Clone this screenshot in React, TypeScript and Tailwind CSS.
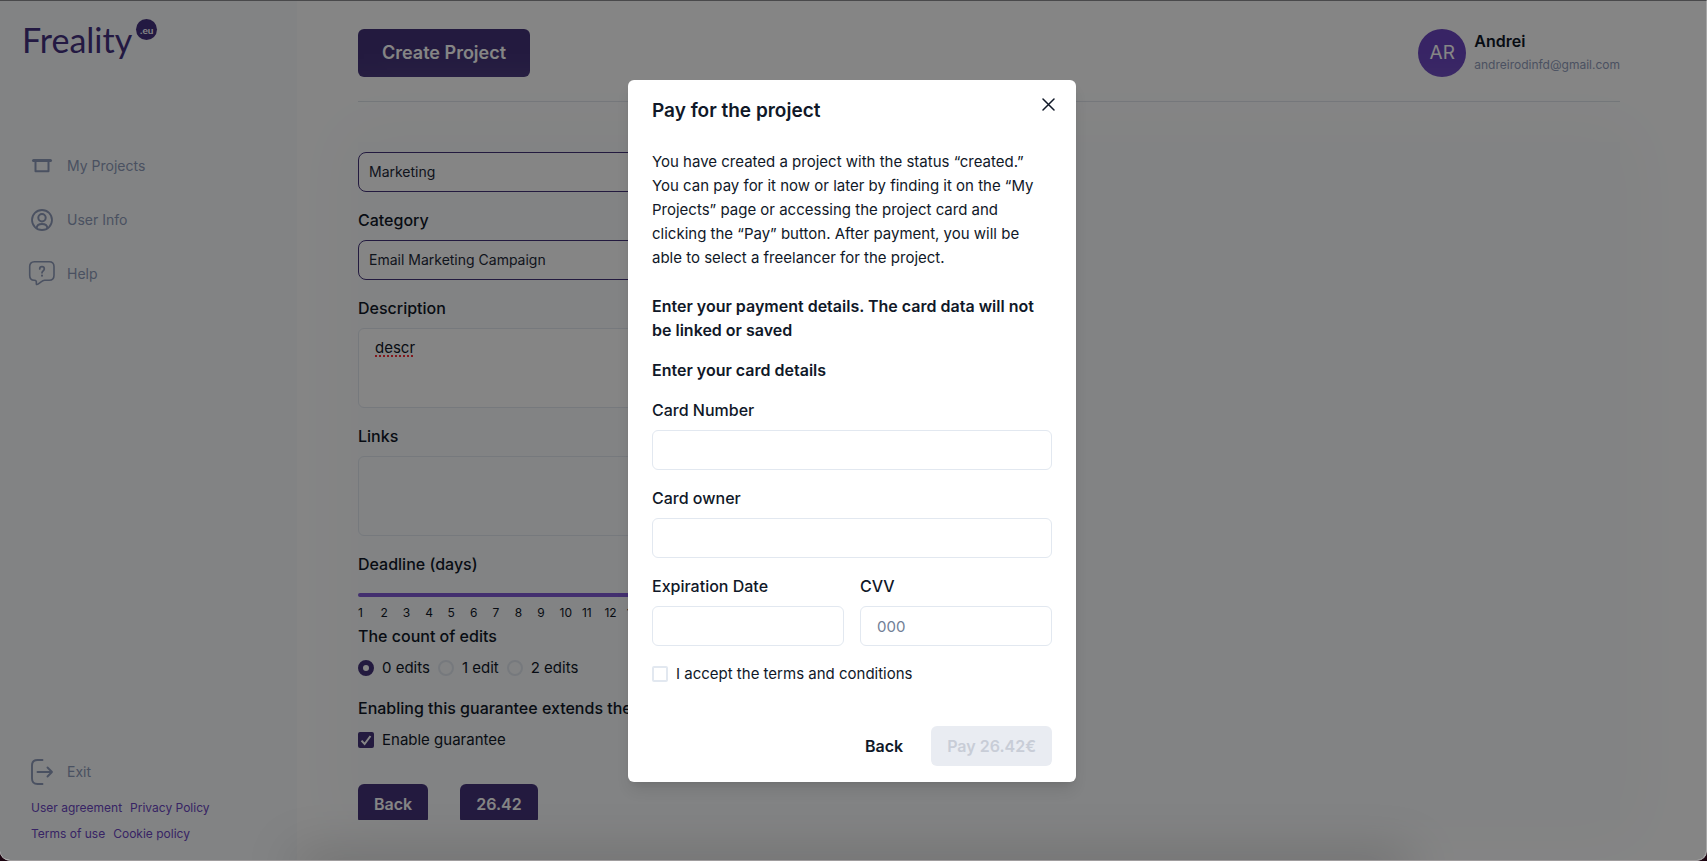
import { useState } from 'react';
import type { ReactNode } from 'react';

const EDIT_OPTIONS = ['0 edits', '1 edit', '2 edits'];
const DAYS = Array.from({ length: 30 }, (_, i) => i + 1);

const LEGAL_LINKS = [
  ['User agreement', 'Privacy Policy'],
  ['Terms of use', 'Cookie policy'],
];

function ProjectsIcon() {
  return (
    <svg width="28" height="28" viewBox="0 0 28 28" fill="none" stroke="currentColor" strokeWidth="2">
      <path d="M5.5 8.500h17" strokeWidth="3" strokeLinecap="round" />
      <path d="M7.500 9v10.300h13V9" strokeLinejoin="round" />
    </svg>
  );
}

function UserIcon() {
  return (
    <svg width="28" height="28" viewBox="0 0 28 28" fill="none" stroke="currentColor" strokeWidth="1.800">
      <circle cx="14" cy="14" r="10" />
      <circle cx="14" cy="11.800" r="3.700" strokeWidth="2" />
      <path d="M8.600 22.200c.2-3 2.200-4.200 5.400-4.200s5.200 1.200 5.400 4.200" strokeWidth="2" />
    </svg>
  );
}

function HelpIcon() {
  return (
    <svg width="28" height="28" viewBox="0 0 28 28" fill="none" stroke="currentColor" strokeWidth="1.600" strokeLinecap="round" strokeLinejoin="round">
      <path d="M6.300 1.800h14.900c3.300 0 4.800 1.900 4.800 4.800v8.600c0 3.200-1.800 5-4.800 5h-4.600c-1.700 0-3.300 1.500-5.200 2.900-1.200.9-2.500 1.700-2.900 1.400-.6-.4.300-2.300-.4-3.500-.3-.6-.9-.8-1.900-.8C3.400 20.200 1.700 18.400 1.700 15.200V6.600c0-2.900 1.500-4.800 4.600-4.800Z" />
      <path d="M11.700 9c0-1.400 1-2.300 2.300-2.300s2.300.9 2.300 2.200c0 1.900-2.300 1.900-2.300 3.900" strokeWidth="1.700" />
      <path d="M14 15.600v.1" strokeWidth="2" />
    </svg>
  );
}

function ExitIcon() {
  return (
    <svg width="28" height="28" viewBox="0 0 28 28" fill="none" stroke="currentColor" strokeWidth="1.900" strokeLinecap="round" strokeLinejoin="round">
      <path d="M14.500 2H9.500C5.800 2 4 3.800 4 7.500v13C4 24.200 5.800 26 9.500 26h5" />
      <path d="M9.500 14H24M19.500 9.500 24 14l-4.500 4.500" />
    </svg>
  );
}

function NavItem({ icon, label }: { icon: ReactNode; label: string }) {
  return (
    <a href="#" className="flex items-center gap-[11px] h-[30px] text-sm text-[#8f9bba]">
      {icon}
      {label}
    </a>
  );
}

function Sidebar() {
  return (
    <aside className="w-[297px] shrink-0 bg-[#f9fbfd] flex flex-col justify-between">
      <div>
        <a href="#" className="flex items-start gap-1 pl-[22px] pt-[18px] text-[#44307f]">
          <span className="font-['Lato'] text-[34px] leading-[42px]">Freality</span>
          <span className="w-[21px] h-[21px] rounded-full bg-[#44307f] flex items-center justify-center font-['Lato'] font-bold text-[10px] leading-none text-white">
            .eu
          </span>
        </a>
        <nav className="flex flex-col gap-6 pl-7 mt-[90px]">
          <NavItem icon={<ProjectsIcon />} label="My Projects" />
          <NavItem icon={<UserIcon />} label="User Info" />
          <NavItem icon={<HelpIcon />} label="Help" />
        </nav>
      </div>
      <div className="pb-[13px]">
        <div className="pl-7">
          <NavItem icon={<ExitIcon />} label="Exit" />
        </div>
        <div className="pl-[31px] mt-2">
          {LEGAL_LINKS.map(row => (
            <div key={row[0]} className="flex gap-2 text-xs leading-[26px] text-[#6b46c1]">
              {row.map(label => <a key={label} href="#">{label}</a>)}
            </div>
          ))}
        </div>
      </div>
    </aside>
  );
}

function Header() {
  return (
    <header className="flex items-center justify-between pb-6 border-b border-[#d9dfe6]">
      <button className="h-12 px-6 rounded-md bg-[#44337a] text-white text-lg font-semibold">Create Project</button>
      <div className="flex items-center gap-2">
        <div className="w-12 h-12 rounded-full bg-[#6b46c1] text-white text-[19px] flex items-center justify-center">AR</div>
        <div>
          <p className="font-semibold">Andrei</p>
          <p className="text-xs leading-6 text-[#8f9bba]">andreirodinfd@gmail.com</p>
        </div>
      </div>
    </header>
  );
}

function CheckBox({ id, checked, onChange }: { id: string; checked: boolean; onChange: () => void }) {
  return (
    <span className="relative flex w-4 h-4">
      <input id={id} type="checkbox" checked={checked} onChange={onChange}
        className="w-4 h-4 appearance-none rounded-xs border-2 border-[#e2e8f0] checked:bg-[#44337a] checked:border-[#44337a]" />
      {checked && (
        <svg className="absolute inset-0 pointer-events-none" width="16" height="16" viewBox="0 0 16 16" fill="none" stroke="white" strokeWidth="2">
          <path d="M3.500 8.600 6.600 12l5.900-8" />
        </svg>
      )}
    </span>
  );
}

function ProjectForm() {
  const [edits, setEdits] = useState(0);
  const [guarantee, setGuarantee] = useState(true);
  const selectClass = 'w-full h-10 px-[10px] appearance-none rounded-lg border border-[#44337a] bg-white text-sm text-gray-800';
  const areaClass = 'block w-full h-20 mt-2 px-4 py-2 resize-none rounded-md border border-[#e2e8f0] text-[15px] leading-[22px]';

  return (
    <form className="max-w-2xl pt-[10px]" onSubmit={e => e.preventDefault()}>
      <select aria-label="Direction" className={selectClass}>
        <option>Marketing</option>
      </select>

      <label htmlFor="category" className="block mt-4 mb-2 font-medium">Category</label>
      <select id="category" className={selectClass}>
        <option>Email Marketing Campaign</option>
      </select>

      <label htmlFor="description" className="block mt-4 font-medium">Description</label>
      <textarea id="description" defaultValue="descr"
        className={`${areaClass} bg-white underline decoration-dotted decoration-2 decoration-red-500 underline-offset-2`} />

      <label htmlFor="links" className="block mt-4 font-medium">Links</label>
      <textarea id="links" className={`${areaClass} bg-transparent`} />

      <label htmlFor="deadline" className="block mt-4 font-medium">Deadline (days)</label>
      <input id="deadline" type="range" min={1} max={30} defaultValue={30}
        className="block w-full h-1 mt-[17px] appearance-none rounded-sm bg-[#805ad5]" />
      <div className="grid grid-cols-30 mt-[5px] text-xs leading-[22px]">
        {DAYS.map(day => <span key={day}>{day}</span>)}
      </div>

      <fieldset>
        <legend className="font-medium">The count of edits</legend>
        <div className="flex gap-2 mt-2">
          {EDIT_OPTIONS.map((label, i) => (
            <label key={label} className="flex items-center gap-2 text-[15px] leading-6">
              <input type="radio" name="edits" checked={edits === i} onChange={() => setEdits(i)}
                className="w-4 h-4 appearance-none rounded-full border-2 border-[#e2e8f0] checked:border-[5px] checked:border-[#44337a] checked:bg-white" />
              {label}
            </label>
          ))}
        </div>
      </fieldset>

      <p className="mt-4 font-medium">Enabling this guarantee extends the deadline</p>
      <div className="flex items-center gap-2 mt-2">
        <CheckBox id="guarantee" checked={guarantee} onChange={() => setGuarantee(!guarantee)} />
        <label htmlFor="guarantee" className="text-[15px] leading-6">Enable guarantee</label>
      </div>

      <div className="flex gap-8 mt-8">
        <button type="button" className="h-10 px-4 rounded-md bg-[#44337a] text-white font-semibold">Back</button>
        <button className="h-10 px-4 rounded-md bg-[#44337a] text-white font-semibold">26.42</button>
      </div>
    </form>
  );
}

function Field({ id, label, placeholder }: { id: string; label: string; placeholder?: string }) {
  return (
    <div className="mt-4">
      <label htmlFor={id} className="block mb-2 font-medium">{label}</label>
      <input id={id} type="text" placeholder={placeholder}
        className="block w-full h-10 px-4 rounded-md border border-[#e2e8f0] text-[15px] placeholder:text-[#718096]" />
    </div>
  );
}

function PaymentModal() {
  const [accepted, setAccepted] = useState(false);

  return (
    <div className="absolute inset-0 bg-black/48 flex justify-center items-start pl-4 pr-[18px] pt-[79px]">
      <div role="dialog" aria-labelledby="pay-title" className="relative w-full max-w-md bg-white rounded-md shadow-lg px-6 py-4">
        <h2 id="pay-title" className="text-[19px] leading-[30px] font-semibold">Pay for the project</h2>
        <button aria-label="Close" className="absolute top-2 right-3 w-8 h-8 flex items-center justify-center">
          <svg width="13" height="13" viewBox="0 0 13 13" stroke="currentColor" strokeWidth="1.500" strokeLinecap="round">
            <path d="m1 1 11 11M12 1 1 12" />
          </svg>
        </button>

        <p className="mt-6 text-[15px] leading-6">
          You have created a project with the status “created.” You can pay for it now or later by finding it on
          the “My Projects” page or accessing the project card and clicking the “Pay” button. After payment, you
          will be able to select a freelancer for the project.
        </p>
        <p className="mt-6 font-semibold">
          Enter your payment details. The card data will not be linked or saved
        </p>
        <p className="mt-4 font-semibold">Enter your card details</p>

        <Field id="card-number" label="Card Number" />
        <Field id="card-owner" label="Card owner" />
        <div className="grid grid-cols-2 gap-4">
          <Field id="expiration" label="Expiration Date" />
          <Field id="cvv" label="CVV" placeholder="000" />
        </div>

        <div className="flex items-center gap-2 mt-4">
          <CheckBox id="terms" checked={accepted} onChange={() => setAccepted(!accepted)} />
          <label htmlFor="terms" className="text-[15px] leading-6">I accept the terms and conditions</label>
        </div>

        <div className="flex justify-end gap-3 mt-10">
          <button className="h-10 px-4 rounded-md font-semibold">Back</button>
          <button disabled={!accepted}
            className="h-10 px-4 rounded-md font-semibold bg-[#44337a] text-white disabled:bg-[#e9ecf2] disabled:text-[#c8cdd7]">
            Pay 26.42€
          </button>
        </div>
      </div>
    </div>
  );
}

export default function App() {
  return (
    <div className="h-screen bg-[#1c0410] font-['Inter',sans-serif] text-base text-gray-900">
      <div className="relative h-full flex overflow-hidden bg-white border-t border-r border-b border-t-[#49494b] border-r-[#a8a8a8] border-b-[#a09d9e] rounded-b-[10px]">
        <Sidebar />
        <main className="flex-1 min-w-0 flex flex-col pl-[61px] pr-[86px] pt-7 pb-10">
          <Header />
          <section className="flex-1 min-h-0 mt-10 bg-[#f9fbfd] shadow-[0_0_60px_15px_#f9fbfd]">
            <div className="h-full overflow-hidden">
              <ProjectForm />
            </div>
          </section>
        </main>
        {/* soft shade along the bottom edge */}
        <div className="absolute -bottom-4 left-[300px] right-[300px] h-4 shadow-[0_0_50px_4px_rgba(0,0,0,0.250)]" />
        <PaymentModal />
      </div>
    </div>
  );
}
